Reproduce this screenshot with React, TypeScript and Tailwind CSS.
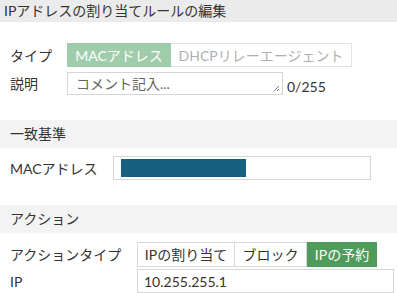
import React from "react";

const font = {
  fontFamily: '"Lato", "Noto Sans CJK JP", sans-serif',
};

function SectionHead({ title }: { title: string }) {
  return (
    <div className="h-[28px] bg-[#f3f3f3] pl-[10px] text-[14px] leading-[28px] text-[#333]">
      {title}
    </div>
  );
}

export default function App() {
  return (
    <div className="w-[397px] h-[293px] overflow-hidden bg-white text-[#333]" style={font}>
      {/* title bar */}
      <div className="h-[22px] bg-[#ebebeb] pl-[4px] text-[14px] leading-[21px] text-[#333]">
        IPアドレスの割り当てルールの編集
      </div>

      {/* type / description */}
      <div className="mt-[21px] pl-[10px] text-[14px]">
        <div className="flex h-[24px] items-center">
          <div className="w-[57px]">タイプ</div>
          <div className="flex h-[24px]">
            <div className="flex h-full w-[104px] items-center justify-center bg-[#9fcdab] text-white">
              MACアドレス
            </div>
            <div className="flex h-full w-[181px] items-center justify-center border border-l-0 border-[#e3e3e3] text-[#b0b0b0]">
              DHCPリレーエージェント
            </div>
          </div>
        </div>
        <div className="mt-[5px] flex h-[23px] items-center">
          <div className="w-[57px]">説明</div>
          <div className="relative flex h-[23px] w-[216px] items-center border border-[#d6d6d6] pl-[8px] text-[#666]">
            コメント記入...
            <svg className="absolute bottom-[2px] right-[2px]" width="7" height="7" viewBox="0 0 7 7">
              <path d="M6 1 L1 6 M6 4 L4 6" stroke="#777" strokeWidth="1" />
            </svg>
          </div>
          <div className="ml-[4px] self-end leading-[16px]">0/255</div>
        </div>
      </div>

      {/* match criteria */}
      <div className="mt-[25px]">
        <SectionHead title="一致基準" />
        <div className="mt-[8px] flex h-[24px] items-center pl-[10px] text-[14px]">
          <div className="w-[103px]">MACアドレス</div>
          <div className="h-[24px] w-[258px] border border-[#d6d6d6] pl-[7px] pt-[2px]">
            <div className="h-[18px] w-[125px] bg-[#17607f]" />
          </div>
        </div>
      </div>

      {/* action */}
      <div className="mt-[25px]">
        <SectionHead title="アクション" />
        <div className="mt-[9px] pl-[10px] text-[14px]">
          <div className="flex h-[25px] items-center">
            <div className="w-[127px]">アクションタイプ</div>
            <div className="flex h-[25px]">
              <div className="flex h-full w-[98px] items-center justify-center border border-[#d9d9d9]">
                IPの割り当て
              </div>
              <div className="flex h-full w-[72px] items-center justify-center border border-l-0 border-[#d9d9d9]">
                ブロック
              </div>
              <div className="flex h-full w-[70px] items-center justify-center bg-[#4f9b5c] text-white">
                IPの予約
              </div>
            </div>
          </div>
          <div className="mt-[2px] flex h-[24px] items-center">
            <div className="w-[127px]">IP</div>
            <div className="flex h-[24px] w-[257px] items-center border border-[#d6d6d6] pl-[6px]">
              10.255.255.1
            </div>
          </div>
        </div>
      </div>
    </div>
  );
}
